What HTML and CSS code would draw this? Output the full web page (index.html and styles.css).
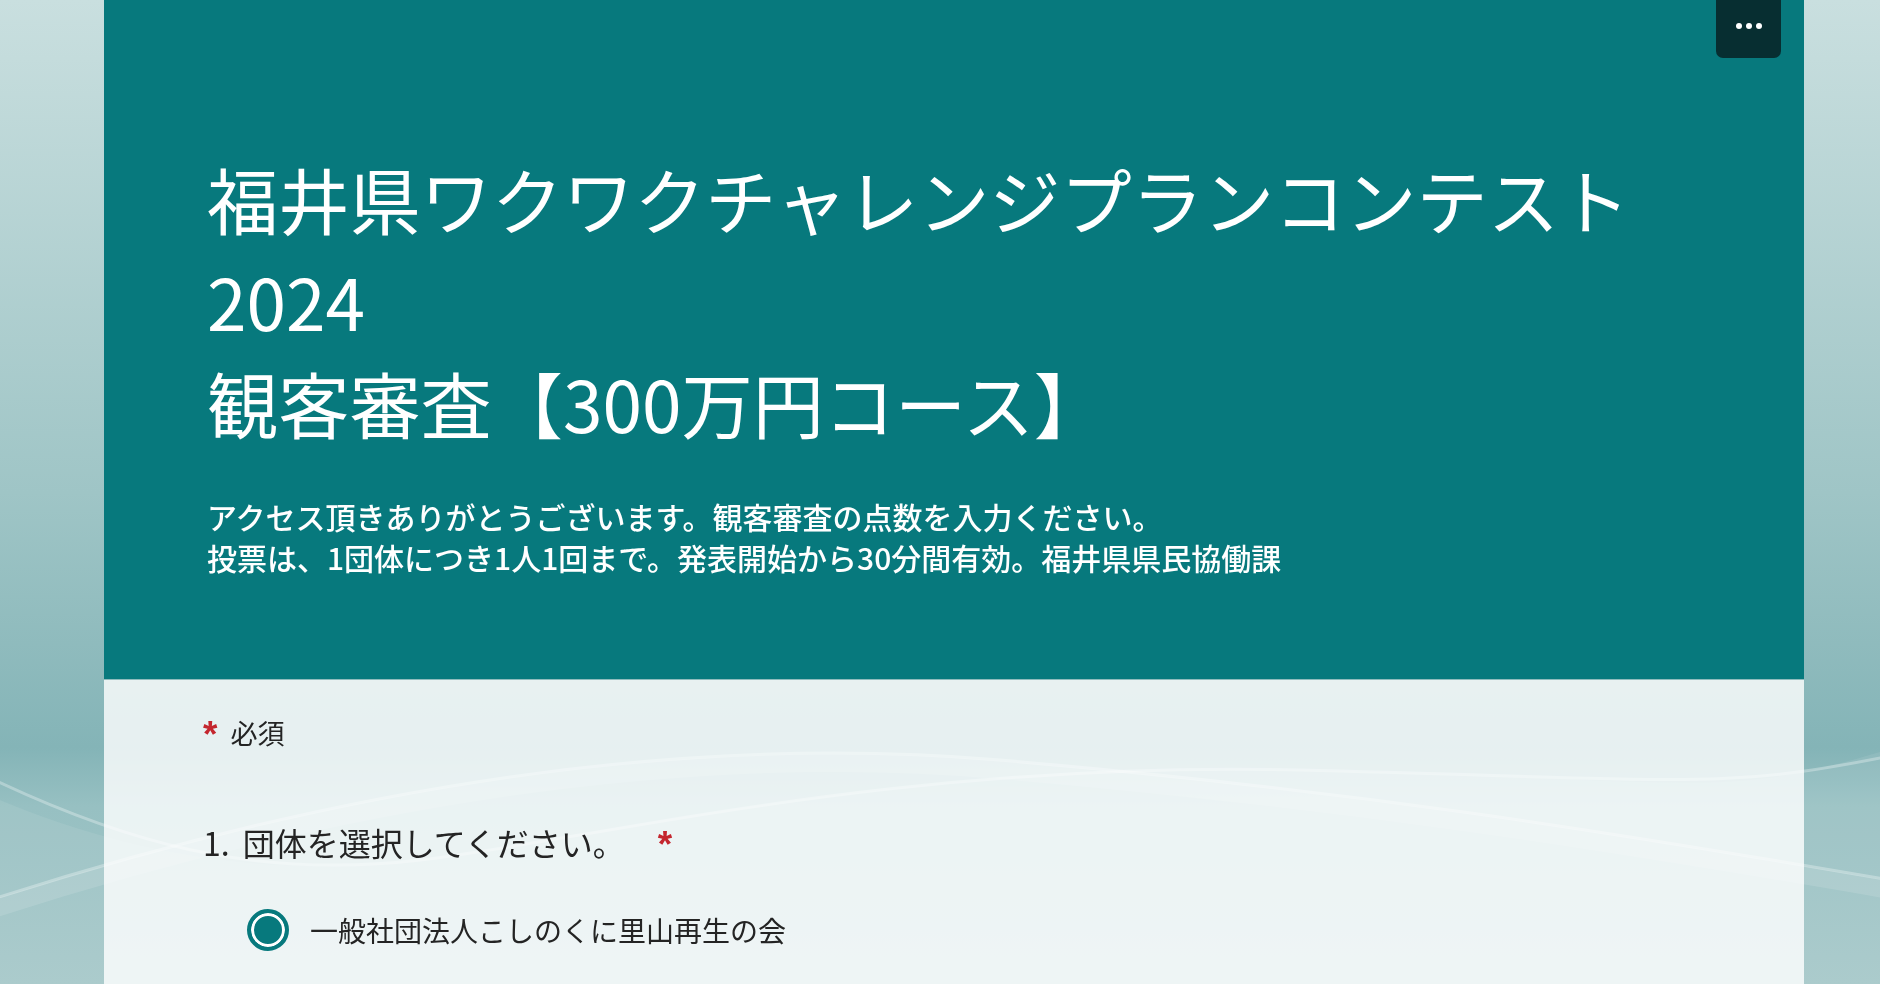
FILE: index.html
```html
<!DOCTYPE html>
<html lang="ja">
<head>
<meta charset="utf-8">
<title>福井県ワクワクチャレンジプランコンテスト2024 観客審査【300万円コース】</title>
<link rel="stylesheet" href="styles.css">
</head>
<body>
<svg class="backdrop" viewBox="0 0 1880 984" preserveAspectRatio="none" aria-hidden="true">
  <defs>
    <linearGradient id="bg" x1="0" y1="0" x2="0" y2="1">
      <stop offset="0" stop-color="#c9dfdf"/>
      <stop offset="0.5" stop-color="#9fc5c6"/>
      <stop offset="0.76" stop-color="#84b4b7"/>
      <stop offset="0.82" stop-color="#97c0c2"/>
      <stop offset="1" stop-color="#a4c7c8"/>
    </linearGradient>
  </defs>
  <rect x="0" y="0" width="1880" height="984" fill="url(#bg)"/>
  <path d="M0 800 C 120 850 260 880 420 860 S 900 760 1300 770 S 1720 800 1880 752 L1880 984 L0 984 Z" fill="#ffffff" fill-opacity="0.08"/>
  <path d="M-10 778 C 120 840 250 880 420 860 S 900 760 1300 770 S 1720 790 1890 756" fill="none" stroke="#ffffff" stroke-opacity="0.3" stroke-width="3"/>
  <path d="M-10 900 C 300 800 650 730 1000 760 S 1600 830 1890 880" fill="none" stroke="#ffffff" stroke-opacity="0.3" stroke-width="3"/>
  <path d="M-10 910 C 300 810 650 740 1000 770 S 1600 840 1890 890" fill="none" stroke="#ffffff" stroke-opacity="0.12" stroke-width="18"/>
</svg>

<main class="page">
  <section class="card">
    <header class="card-header">
      <h1 class="title">福井県ワクワクチャレンジプランコンテスト<br>2024<br>観客審査【300万円コース】</h1>
      <p class="desc">アクセス頂きありがとうございます。観客審査の点数を入力ください。<br>投票は、1団体につき1人1回まで。発表開始から30分間有効。福井県県民協働課</p>
      <button class="more" type="button" aria-label="その他のオプション">
        <span class="dot"></span><span class="dot"></span><span class="dot"></span>
      </button>
    </header>
    <div class="card-body">
      <p class="required-note"><span class="star note-star">*</span>必須</p>
      <div class="question">
        <h2 class="q-title"><span class="q-num">1.</span>団体を選択してください。<span class="star q-star">*</span></h2>
        <label class="option">
          <span class="radio checked"></span>
          <span class="opt-text">一般社団法人こしのくに里山再生の会</span>
        </label>
      </div>
    </div>
  </section>
</main>
</body>
</html>
```

FILE: styles.css
```css
html {
  background: #a4c7c8;
}
body {
  margin: 0;
  font-family: "Noto Sans CJK JP", "Noto Sans", sans-serif;
  color: #242424;
  overflow: hidden;
  height: 984px;
}
.backdrop {
  position: fixed;
  left: 0;
  top: 0;
  width: 100%;
  height: 100%;
  z-index: -1;
}
.page {
  padding-left: 104px;
}
.card {
  width: 1700px;
  display: flex;
  flex-direction: column;
}
.card-header {
  position: relative;
  background: #07797d;
  color: #ffffff;
  padding: 147px 103px 101px 103px;
  border-bottom: 1px solid #8fbcbd;
}
.title {
  margin: 0;
  font-size: 71.2px;
  font-weight: 400;
  line-height: 102px;
}
.desc {
  margin: 43px 0 0 0;
  font-size: 30px;
  font-weight: 500;
  line-height: 41px;
}
.more {
  position: absolute;
  top: 0;
  right: 23px;
  width: 65px;
  height: 58px;
  background: #072e31;
  border: none;
  border-radius: 0 0 7px 7px;
  padding: 23px 0 0 0;
  display: flex;
  justify-content: center;
  align-items: flex-start;
  gap: 4px;
}
.dot {
  width: 6px;
  height: 6px;
  border-radius: 50%;
  background: #ffffff;
}
.card-body {
  background: rgba(255, 255, 255, 0.8);
  padding: 35px 102px 80px 99px;
  min-height: 300px;
}
.required-note {
  margin: 0;
  font-size: 27px;
  line-height: 36px;
  display: flex;
  align-items: flex-start;
}
.star {
  color: #c4262e;
  font-family: "Liberation Sans", Arial, sans-serif;
  font-size: 37px;
  font-weight: 700;
  line-height: 36px;
}
.note-star {
  margin-top: 2px;
  margin-right: 13px;
}
.question {
  margin-top: 67px;
}
.q-title {
  margin: 0;
  font-size: 32px;
  font-weight: 400;
  line-height: 44px;
  display: flex;
  align-items: flex-start;
}
.q-num {
  margin-right: 13px;
}
.q-star {
  margin-top: 7px;
  margin-left: 33px;
}
.option {
  margin-top: 45px;
  margin-left: 44px;
  display: flex;
  align-items: center;
  gap: 21px;
  height: 42px;
}
.radio {
  width: 42px;
  height: 42px;
  box-sizing: border-box;
  border-radius: 50%;
  border: 4px solid #07797d;
  background: #07797d;
  box-shadow: inset 0 0 0 3px #ffffff;
  flex: none;
}
.opt-text {
  font-size: 28px;
  line-height: 42px;
}
```
